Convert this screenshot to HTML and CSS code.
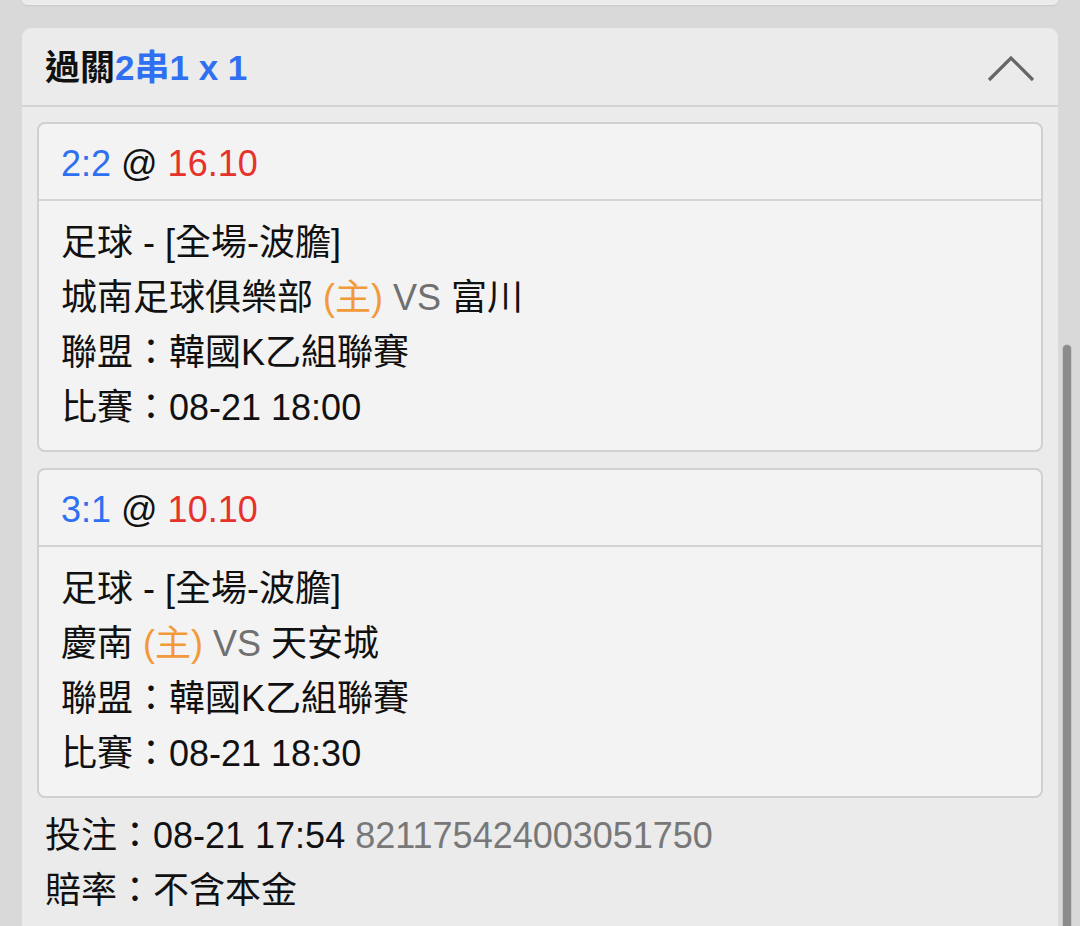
FILE: index.html
```html
<!DOCTYPE html>
<html lang="zh-Hant">
<head>
<meta charset="utf-8">
<link rel="stylesheet" href="styles.css">
</head>
<body>
<div class="page">
  <div class="prev-card"></div>
  <section class="panel">
    <div class="panel-head">
      <div class="title">過關<span class="blue">2串1 x 1</span></div>
      <svg class="chevron" width="48" height="28" viewBox="0 0 48 28"><polyline points="2,26 24,4 46,26" fill="none" stroke="#666" stroke-width="3.2"/></svg>
    </div>
    <div class="panel-body">
      <div class="card">
        <div class="card-head"><span class="blue">2:2</span> @ <span class="red">16.10</span></div>
        <div class="card-body">
          <div class="line">足球 - [全場-波膽]</div>
          <div class="line">城南足球俱樂部 <span class="orange">(主)</span> <span class="gray">VS</span> 富川</div>
          <div class="line">聯盟：韓國K乙組聯賽</div>
          <div class="line">比賽：08-21 18:00</div>
        </div>
      </div>
      <div class="card">
        <div class="card-head"><span class="blue">3:1</span> @ <span class="red">10.10</span></div>
        <div class="card-body">
          <div class="line">足球 - [全場-波膽]</div>
          <div class="line">慶南 <span class="orange">(主)</span> <span class="gray">VS</span> 天安城</div>
          <div class="line">聯盟：韓國K乙組聯賽</div>
          <div class="line">比賽：08-21 18:30</div>
        </div>
      </div>
      <div class="footer">
        <div class="line">投注：08-21 17:54 <span class="gray light">821175424003051750</span></div>
        <div class="line">賠率：不含本金</div>
      </div>
    </div>
  </section>
  <div class="scroll-thumb"></div>
</div>
</body>
</html>
```

FILE: styles.css
```css
html, body {
  margin: 0;
  padding: 0;
  height: 100%;
  overflow: hidden;
}
body {
  background: #d9d9d9;
  font-family: "Liberation Sans", "Noto Sans CJK TC", sans-serif;
  font-size: 36px;
  color: #111;
}
.page {
  position: relative;
  padding: 0 22px;
  height: 926px;
}
.prev-card {
  height: 5px;
  background: #ececec;
  border-radius: 0 0 9px 9px;
  box-shadow: 0 1px 2px rgba(0,0,0,0.08);
}
.panel {
  margin-top: 23px;
  background: #ebebeb;
  border-radius: 9px 9px 0 0;
  height: 900px;
}
.panel-head {
  height: 77px;
  display: flex;
  align-items: center;
  justify-content: space-between;
  padding: 0 23px 0 23px;
  border-bottom: 2px solid #d3d3d3;
}
.title {
  font-weight: bold;
  font-size: 35px;
  margin-top: -4px;
}
.chevron {
  display: block;
  margin-top: 2px;
}
.blue { color: #2f6ff1; }
.red { color: #e5332c; }
.orange { color: #f29a3a; }
.gray { color: #707070; }
.light { color: #787878; }
.panel-body {
  padding: 15px 15px 0 15px;
  display: flex;
  flex-direction: column;
  gap: 16px;
}
.card {
  background: #f3f3f3;
  border: 2px solid #d0d0d0;
  border-radius: 8px;
}
.card-head {
  height: 75px;
  line-height: 79px;
  padding-left: 22px;
  border-bottom: 2px solid #d3d3d3;
  white-space: nowrap;
}
.card-body {
  padding: 14px 22px 15px 22px;
}
.line {
  line-height: 55px;
  height: 55px;
  white-space: nowrap;
}
.footer {
  margin-top: -6px;
  padding-left: 8px;
}
.scroll-thumb {
  position: absolute;
  left: 1063px;
  top: 345px;
  width: 8px;
  height: 600px;
  background: #8c8c8c;
  border-radius: 4px;
  box-shadow: 0 0 0 1px #c9c9c9;
}
```
